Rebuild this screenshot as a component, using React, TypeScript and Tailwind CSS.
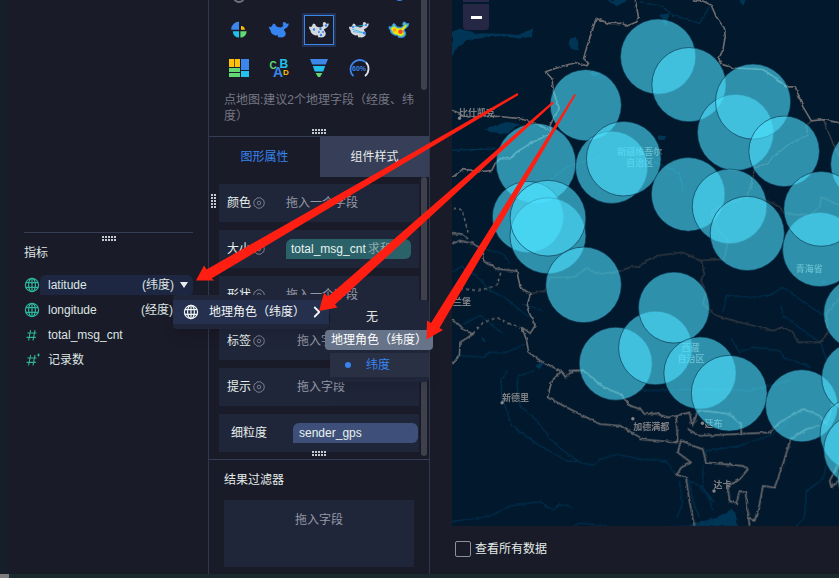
import React from "react";
import { ChevronRight } from "lucide-react";

const FONT = "font-['Liberation_Sans','Noto_Sans_CJK_SC',sans-serif]";

const CHINA =
  "M0 4.6L1.4 5 3 4.2 3.6 2.6 4.6 1.6 6.2 2.2 7 4 8.6 5 11.6 5.4 13.6 4.4 14.4 3.2 13.6 2.2 14.4 0.2 16 0 17.4 1.8 19.8 1.6 19.4 3.6 18 5.4 16.4 6.6 14.8 7.6 15.6 9 16.8 11 16.4 13.4 14.6 15 12.6 15.6 11 15.2 9.4 15.4 8.6 13.2 6.4 13.4 3.6 12.2 2 10.6 1.4 8.2 0.2 6.6Z";

function Globe({ className }: { className: string }) {
  return (
    <svg viewBox="0 0 16 16" className={className} fill="none" stroke="currentColor" strokeWidth="1.2" aria-hidden="true">
      <circle cx="8" cy="8" r="6.6" />
      <ellipse cx="8" cy="8" rx="3.4" ry="6.6" />
      <path d="M8 1.4V14.6M1.8 5.6H14.2M1.8 10.4H14.2" />
    </svg>
  );
}

function Hash({ starred }: { starred?: boolean }) {
  return (
    <svg viewBox="0 0 16 16" className="size-4 text-[#2fb59c]" fill="none" stroke="currentColor" strokeWidth="1.1" aria-hidden="true">
      <path d="M6.6 3L4.6 13.5M11 3L9 13.5M3.4 6H12.6M2.6 10.4H11.8" />
      {starred && <path d="M14.5 1.6V4.4M13.2 3H15.8" />}
    </svg>
  );
}

function Gear() {
  return (
    <svg viewBox="0 0 12 12" className="size-3 text-[#767c8b]" fill="none" stroke="currentColor" aria-hidden="true">
      <path d="M4 0.9H8L9 2.4 10.6 3 11.3 6 10.6 9 9 9.6 8 11.1H4L3 9.6 1.4 9 0.7 6 1.4 3 3 2.4Z" />
      <circle cx="6" cy="6" r="1.8" />
    </svg>
  );
}

function Grip({ vertical }: { vertical?: boolean }) {
  return (
    <svg
      viewBox={vertical ? "0 0 5 14" : "0 0 14 5"}
      className={vertical ? "h-[14px] w-[5px]" : "h-[5px] w-[14px]"}
      fill="#c3cad0"
      aria-hidden="true"
    >
      {[0, 3, 6, 9, 12].flatMap((a) =>
        [0, 3].map((b) => (
          <rect key={`${a}-${b}`} x={vertical ? b : a} y={vertical ? a : b} width="2" height="2" />
        ))
      )}
    </svg>
  );
}

const chartIcons: { name: string; art: React.ReactNode }[] = [
  {
    name: "饼图",
    art: (
      <g>
        <path d="M10 9.8V1.5A8 8 0 0 0 2.2 9.8Z" fill="#3b86e8" />
        <path d="M12 9.8V6A4.5 4.5 0 0 1 16 9.8Z" fill="#ffc107" />
        <path d="M10 11.2H3.8A6.3 6.3 0 0 0 10 17.6Z" fill="#22c0ee" />
        <path d="M11.4 11.2H17.6A6.3 6.3 0 0 1 11.4 17.6Z" fill="#62d873" />
      </g>
    ),
  },
  { name: "填充地图", art: <path d={CHINA} transform="translate(0 2)" fill="#3684f0" /> },
  {
    name: "点地图",
    art: (
      <g transform="translate(0 2)">
        <path d={CHINA} fill="#d3d8df" />
        <g fill="#3684f0">
          <circle cx="5" cy="7.5" r="1.2" />
          <circle cx="11.5" cy="7" r="1.2" />
          <circle cx="10" cy="10" r="1" />
          <circle cx="14" cy="10" r="1" />
          <circle cx="12" cy="13" r="1.2" />
          <circle cx="17" cy="3.5" r="1.2" />
        </g>
      </g>
    ),
  },
  {
    name: "线地图",
    art: (
      <g transform="translate(0 2)">
        <path d={CHINA} fill="#d3d8df" />
        <path d="M3 7L15 11M4 9.5L15 11M17 3L3 5" stroke="#39b7ea" strokeWidth="0.8" fill="none" />
        <g fill="#3684f0">
          <circle cx="4" cy="5" r="1.1" />
          <circle cx="15.5" cy="11" r="1.6" />
          <circle cx="17" cy="3" r="1.1" />
        </g>
      </g>
    ),
  },
  {
    name: "热力地图",
    art: (
      <g transform="translate(0 2)">
        <path d={CHINA} fill="#4fc6a0" stroke="#3684f0" strokeWidth="1" />
        <path d="M2 6.5L5 4.5 8 6.5 13 6.5 16 3.5 18 3 15 7.5 13.5 8.5 15 12 12 14 9 13 5 11.5Z" fill="#ffe600" />
        <circle cx="5.6" cy="8" r="1.8" fill="#ff9a1f" />
        <circle cx="11.5" cy="9.8" r="2.3" fill="#ff4a2a" />
      </g>
    ),
  },
  {
    name: "矩形树图",
    art: (
      <g>
        <path d="M0 1H5V9H0ZM5.7 1H11V9H5.7Z" fill="#ffc107" />
        <path d="M0 10H11V14H0ZM0 15H11V19H0Z" fill="#62d873" />
        <path d="M12 1H20V12H12Z" fill="#3b86e8" />
        <path d="M12 13H20V19H12Z" fill="#22c0ee" />
      </g>
    ),
  },
  {
    name: "词云",
    art: (
      <g fontFamily="Liberation Sans, sans-serif" fontWeight="700">
        <text x="0.5" y="11" fontSize="10" fill="#62d873">C</text>
        <text x="10.5" y="10" fontSize="12" fill="#22c0ee">B</text>
        <text x="4" y="19" fontSize="14" fill="#3b86e8">A</text>
        <text x="14" y="16.5" fontSize="8" fill="#ffc107">D</text>
      </g>
    ),
  },
  {
    name: "漏斗图",
    art: (
      <g>
        <path d="M1 1H19L16.8 6.6H3.2Z" fill="#3b86e8" />
        <path d="M3.8 8H16.2L14.2 13.4H5.8Z" fill="#22c0ee" />
        <path d="M6.6 15H13.4L11 19H9Z" fill="#62d873" />
      </g>
    ),
  },
  {
    name: "仪表盘",
    art: (
      <g fill="none" strokeWidth="1.8">
        <path d="M4.5 18.2A9.2 9.2 0 1 1 17 4.4" stroke="#3b86e8" />
        <path d="M17 4.4A9.2 9.2 0 0 1 16 18" stroke="#dfe3ea" />
        <text x="10" y="13" textAnchor="middle" fontSize="7" fontWeight="700" fill="#3b86e8" stroke="none" fontFamily="Liberation Sans, sans-serif">60%</text>
      </g>
    ),
  },
];

function GeoRoleMenu() {
  return (
    <div className="absolute top-full left-[133px] z-20 w-[156px] rounded-sm bg-[#20273b] py-[5px] shadow-lg">
      <div className="relative">
        <button className="flex h-6 w-full items-center bg-[#24304d] pl-[10px] text-[#f2f5f5]">
          <Globe className="size-4" />
          <span className="ml-[10px] whitespace-nowrap">地理角色（纬度）</span>
          <ChevronRight className="ml-auto mr-[3px] size-[18px]" strokeWidth={2.4} />
        </button>
        <div className="absolute top-0 left-[157px] w-[99px] rounded-sm bg-[#20263a] pb-[5px] shadow-lg">
          <button className="block h-[30px] w-full pt-[3px] pl-9 text-left text-[#e0e5e5]">无</button>
          <div role="tooltip" className="relative -ml-[5px] flex h-5 w-[108px] items-center rounded-sm bg-[#677388] pl-[6px] whitespace-nowrap text-white">
            地理角色（纬度）
          </div>
          <button className="mt-[3px] flex h-6 w-full items-center bg-[#2a3044] pl-[15px] text-[#3684f0]">
            <span className="size-[6px] rounded-full bg-[#3684f0]" />
            <span className="ml-[15px]">纬度</span>
          </button>
        </div>
      </div>
    </div>
  );
}

function MetricsPanel() {
  return (
    <section className="w-[201px] shrink-0 border-r border-[#30384f] pt-[232px] pr-[15px] pl-4 text-[#dde5e3]">
      <div className="flex h-3 justify-center border-t border-[#363e55] pt-[3px]">
        <Grip />
      </div>
      <h2 className="h-[31px] leading-[19px]">指标</h2>
      <ul className="flex flex-col gap-[5px]">
        <li className="relative flex h-5 items-center">
          <Globe className="size-4 text-[#2fb59c]" />
          <button className="flex h-5 flex-1 items-center rounded-t-md rounded-br-sm bg-[#1d2742] pr-[5px] pl-2">
            <span>latitude</span>
            <span className="ml-auto">(纬度)</span>
            <span className="ml-[6px] border-x-4 border-t-[6px] border-x-transparent border-t-[#e8eeee]" />
          </button>
          <div className="absolute top-0 left-4 h-5">
            <GeoRoleMenu />
          </div>
        </li>
        <li className="flex h-5 items-center">
          <Globe className="size-4 text-[#2fb59c]" />
          <span className="ml-2">longitude</span>
          <span className="mr-5 ml-auto">(经度)</span>
        </li>
        <li className="flex h-5 items-center">
          <Hash />
          <span className="ml-2">total_msg_cnt</span>
        </li>
        <li className="flex h-5 items-center">
          <Hash starred />
          <span className="ml-2">记录数</span>
        </li>
      </ul>
    </section>
  );
}

const shelves = [
  { name: "颜色", hint: "拖入一个字段", wide: true },
  { name: "大小", chip: "total_msg_cnt", agg: "求和", wide: true },
  { name: "形状", hint: "拖入一个字段", wide: true },
  { name: "标签", hint: "拖入字段" },
  { name: "提示", hint: "拖入字段" },
];

function ConfigPanel() {
  return (
    <section className="flex w-[221px] shrink-0 flex-col border-r border-[#30384f]">
      <div className="relative h-[137px] overflow-hidden border-b border-[#363e55] pt-[14px]">
        <div className="absolute -top-[9px] left-6 size-3 rounded-full border-2 border-[#6f7380]" />
        <div className="absolute -top-[10px] left-[185px] size-[11px] rounded-full bg-[#3b86e8]" />
        <div className="grid w-[210px] grid-cols-5 gap-y-[6px] pl-[10px]">
          {chartIcons.map((icon, i) => (
            <button key={icon.name} aria-label={icon.name} className="flex h-8 items-center justify-center">
              <span
                className={
                  i === 2
                    ? "flex size-[30px] items-center justify-center border border-[#3b86e8] outline-2 outline-[#20304e]"
                    : "flex size-[30px] items-center justify-center"
                }
              >
                <svg viewBox="0 0 20 20" className="size-5 shrink-0 overflow-visible">
                  {icon.art}
                </svg>
              </span>
            </button>
          ))}
        </div>
        <p className="mt-2 ml-[15px] w-[192px] leading-4 break-all text-[#747884]">点地图:建议2个地理字段（经度、纬度）</p>
        <div className="absolute bottom-[2px] left-[103px]">
          <Grip />
        </div>
        <div className="absolute top-0 right-[2px] h-[90px] w-[6px] rounded-b-full bg-[#3e404c]" />
      </div>

      <div role="tablist" className="flex h-10">
        <button role="tab" aria-selected="true" className="flex-1 text-[#3684f0]">图形属性</button>
        <button role="tab" aria-selected="false" className="w-[109px] bg-[#363f57] text-[#e6ecea]">组件样式</button>
      </div>

      <div className="relative flex h-[283px] flex-col gap-2 border-b border-[#363e55] pt-[7px] pr-[10px] pl-[10px]">
        <div className="absolute top-[17px] left-[2px]">
          <Grip vertical />
        </div>
        <div className="absolute top-0 right-[2px] h-[279px] w-[6px] rounded-full bg-[#3e404c]" />
        {shelves.map((s) => (
          <div key={s.name} className="flex h-[38px] items-center bg-[#20263a] pl-2">
            <span className="text-[#e6eeea]">{s.name}</span>
            <span className="ml-[2px]">
              <Gear />
            </span>
            {s.chip ? (
              <span className="ml-[21px] flex h-5 w-[125px] items-center rounded-t-md rounded-br-md bg-[#2b6169] pl-[5px] text-[#e6f2ee]">
                {s.chip}
                <span className="ml-[2px] text-[#8fa9ac]">{s.agg}</span>
              </span>
            ) : (
              <span className={s.wide ? "ml-[21px] text-[#9499a6]" : "ml-8 text-[#9499a6]"}>{s.hint}</span>
            )}
          </div>
        ))}
        <div className="flex h-[38px] items-center bg-[#20263a] pl-3">
          <span className="text-[#e6eeea]">细粒度</span>
          <span className="ml-[26px] flex h-5 w-[125px] items-center rounded-t-md rounded-br-md bg-[#3e507a] pl-[6px] text-[#e6f2ee]">
            sender_gps
          </span>
        </div>
        <div className="absolute bottom-[3px] left-[103px]">
          <Grip />
        </div>
      </div>

      <div className="px-[15px] pt-[10px] pb-[7px]">
        <h2 className="h-[30px] leading-5 text-[#e4ece8]">结果过滤器</h2>
        <div className="h-[67px] bg-[#20263a] pt-[10px] text-center leading-5 text-[#9499a6]">拖入字段</div>
      </div>
    </section>
  );
}

const bubbles: [number, number, number][] = [
  [585.5, 105, 35.5], [657.7, 56.5, 37.5], [688.5, 84.5, 37], [735, 132.2, 38], [752.5, 101.4, 37.5],
  [783.5, 151, 35.2], [866, 164, 36], [535.8, 163, 39.8], [611.3, 167, 36], [623.4, 158.4, 37.2],
  [687.7, 194, 36.7], [729, 206, 37.2], [746.7, 233, 37], [819, 249, 37], [820.5, 208.5, 37.3],
  [527.8, 216.5, 35.5], [547.8, 235.3, 37.9], [547.8, 217.8, 37.8], [583.3, 284.3, 37.7],
  [615.4, 363, 36.4], [655, 347.3, 36.7], [673.5, 307, 35.4], [699.5, 372.3, 36], [728.7, 392.5, 37.8],
  [801, 405, 36], [859, 313, 36], [857, 377, 36], [856, 433, 36.5], [859, 449, 36], [873, 478, 36],
];

const places: [string, number, number][] = [
  ["比什凯克", 459, 116], ["新疆维吾尔", 617, 155], ["自治区", 626, 166], ["青海省", 795, 271],
  ["西藏", 681, 350], ["自治区", 677, 361], ["新德里", 502, 400], ["加德满都", 633, 429],
  ["廷布", 704, 426], ["达卡", 713, 487], ["兰堡", 453, 304],
];

// Map sheets: each is drawn at three times scale from its own origin.
const sheets = [
  {
    x: 440, y: 0,
    border: "M585 0L594 50 590 65 560 78 545 70 505 70 468 55 440 140 430 175 445 190 440 197 405 187 345 205 316 215 335 235 340 275 357 325 345 345 330 375 332 400 270 430 230 455 210 475 180 475 165 490 155 510 115 515 70 505 36 532M36 330L75 350 170 348 240 355 300 375 325 390",
    dim: "",
    river: "M36 450L200 445M290 570L380 500 480 470",
    lake: "M36 95L60 85 100 100 180 100 235 105 280 85 275 110 240 115 180 108 80 120 45 150 36 170ZM390 115L410 110 418 150 395 150 385 130ZM135 385L200 365 240 372 200 400 150 395ZM500 0L530 18 565 0ZM445 215L480 220 465 228Z",
  },
  {
    x: 639, y: 0,
    border: "M160 0L190 3 215 15 230 50 255 85 257 110 250 150 238 175 245 192 280 203 370 208 410 235 440 260 467 260 490 320 515 362 550 358 600 368",
    dim: "M550 358L580 430 600 470M515 362L500 375 505 405 450 430 400 470 385 490 345 500 335 570",
    river: "M0 5L70 20 100 45 180 70 210 20M0 480L60 490 120 520 130 570",
    lake: "M60 45L90 40 80 80ZM55 405L80 408 75 420 55 418ZM300 0L318 0 312 15Z",
  },
  {
    x: 440, y: 180,
    border: "M36 190L60 180 100 190 125 205 130 240 170 265 230 272 240 320 270 340 260 380 285 435 270 458 245 440 260 480 265 515 300 540 360 570M36 160L60 160 85 175M36 415L60 435 75 450 100 460 60 485 58 525 36 552M385 570L430 568",
    dim: "M270 340L315 330 330 290 400 290 440 262 470 280 530 275 575 258 600 260",
    river: "M36 275L65 258 80 275 110 285 150 330 200 355 260 405 280 410M130 205L190 220 210 250M245 370L310 390M60 525L130 530 150 515 200 515 255 490M70 430L120 405 150 430 190 460",
    lake: "M122 465L138 482 130 485ZM285 555L312 540 300 568Z",
  },
  {
    x: 639, y: 180,
    border: "",
    dim: "M0 258L20 240 60 225 130 215 180 240 255 236 265 180 230 140 215 95 250 75 320 50 338 0M185 240L195 280 185 300 200 340 190 370 230 405 300 425 400 450 430 440 460 455 475 485 540 485 565 455 560 400 600 350M380 60L420 80 435 100 510 105 540 80 545 50 600 75",
    river: "M252 395L260 345 340 350 390 345 430 320 500 370 550 405M425 375L430 405 520 470 545 490 560 540M275 475L300 515 340 500 420 510 430 530 520 560",
    lake: "M540 303L560 303 550 312Z",
  },
  {
    x: 440, y: 370,
    border: "M365 0L335 30 322 80 400 120 480 160 540 165 600 200M365 5L375 18 400 0 430 0 490 50 540 70 570 105 600 115",
    dim: "",
    river: "M285 0L235 15 230 40 240 105 290 150 330 205 370 240 420 275 460 283 480 265 530 250 600 265M205 0L182 30 185 80 200 120 215 165 300 225 380 270 410 272M36 452L150 435 210 405 300 392 340 418 360 398 395 410M400 465L420 457 500 465",
    lake: "",
  },
  {
    x: 639, y: 370,
    border: "M0 110L15 130 50 128 85 140 110 135 150 125 158 165 165 150 175 120 210 122 270 130 305 160 305 190M145 175L180 195 390 185 420 155 490 115 540 135 560 160 580 100M0 205L60 210 115 215 110 135M165 465L150 390 140 320 112 312 125 290 155 275 115 245 125 208 160 225 190 235 200 275 310 285 325 295 300 325 265 345 270 390 290 398 300 360 318 365 330 465M330 440L345 450 360 400 370 345 405 350 430 280 453 205 500 175 540 165M600 325L575 350 570 330 600 270",
    dim: "",
    river: "M0 265L80 270 110 310 190 350 225 395M190 350L190 290 200 240 300 225 400 190 450 150M120 330L130 400 110 440M150 330L160 390 180 440M180 350L210 380 220 420M470 465L495 440 500 360 550 325 560 280M0 60L200 55 330 60 450 30",
    lake: "M90 465L150 462 230 440 275 415 290 430 295 465Z",
  },
];

function MapView() {
  return (
    <div className="relative flex-1 overflow-hidden bg-[#01182d]">
      <svg viewBox="452 0 387 525" preserveAspectRatio="xMinYMin slice" className="absolute inset-0 size-full" role="img" aria-label="点地图">
        <defs>
          <filter id="coast" x="-5%" y="-5%" width="110%" height="110%">
            <feTurbulence type="fractalNoise" baseFrequency="0.2" numOctaves="2" seed="4" />
            <feDisplacementMap in="SourceGraphic" scale="3" xChannelSelector="R" yChannelSelector="G" />
          </filter>
        </defs>
        <g filter="url(#coast)" fill="none" strokeLinejoin="round">
          {sheets.map((s) => (
            <g key={`${s.x}-${s.y}`} transform={`translate(${s.x} ${s.y}) scale(0.33333)`}>
              <path d={s.lake} fill="#033656" />
              <path d={s.river} stroke="#06304c" strokeWidth="4" />
              <path d={s.dim} stroke="#3a3d44" strokeWidth="4" />
              <path d={s.border} stroke="#6c6b6e" strokeWidth="5" />
            </g>
          ))}
          <g stroke="#6c6b6e" strokeWidth="1.5" strokeDasharray="3 3">
            <path d="M453 208L462 209 468 232M460 288L478 290 497 285 501 271M473 333L483 322 497 317 507 322 520 327" />
          </g>
        </g>
        <g fill="#85858a">
          <circle cx="459.5" cy="118" r="1.7" />
          <circle cx="502" cy="402" r="1.7" />
          <circle cx="632.5" cy="418" r="1.7" />
          <circle cx="702" cy="422.5" r="1.7" />
          <circle cx="713.5" cy="490" r="1.7" />
        </g>
        <g fill="#808084" fontSize="9" fontWeight="700" fontFamily="Noto Sans CJK SC, sans-serif">
          {places.map(([name, x, y]) => (
            <text key={`${name}-${x}`} x={x} y={y}>{name}</text>
          ))}
        </g>
        <g fill="#4de1ff" fillOpacity="0.6" stroke="#0d3550" strokeOpacity="0.8" strokeWidth="0.8">
          {bubbles.map(([x, y, r]) => (
            <circle key={`${x}-${y}`} cx={x} cy={y} r={r} />
          ))}
        </g>
      </svg>
      <div className="absolute top-0 left-[11px] flex flex-col gap-[2px]">
        <div className="h-[2px] w-[26px] bg-[#26294a]" />
        <button aria-label="缩小" className="flex size-[26px] items-center justify-center rounded-b bg-[#252744]">
          <span className="h-[3px] w-[11px] bg-white" />
        </button>
      </div>
    </div>
  );
}

function Arrows() {
  return (
    <svg viewBox="0 0 600 360" className="pointer-events-none absolute top-0 left-0 z-30 h-[360px] w-[600px]" fill="#ff1f12" aria-hidden="true">
      <path d="M196 280.5L204 265.5 206.5 269.5 517.5 93 518.5 95 211.5 278.5 214.5 280.5Z" />
      <path d="M319 311L324 293 328 296.5 552.5 101.5 554 103 335 304.5 337.5 307.5Z" />
      <path d="M426.5 339.5L427 320.5 431 323 574.3 94 575.8 95 439.5 328 443 330Z" />
    </svg>
  );
}

export default function App() {
  return (
    <div className={`relative flex min-h-screen flex-col overflow-hidden bg-[#1a1b28] text-[12px] leading-5 ${FONT}`}>
      <main className="flex flex-1">
        <div className="w-2 shrink-0 bg-[#161e2a]" />
        <MetricsPanel />
        <ConfigPanel />
        <section className="flex min-w-0 flex-1 flex-col pl-[22px]">
          <MapView />
          <label className="flex h-12 items-center gap-1 pb-[3px] pl-[3px] text-[#e4ece8]">
            <input type="checkbox" className="size-4 appearance-none rounded-xs border border-[#8d90a0]" />
            查看所有数据
          </label>
        </section>
      </main>
      <footer className="h-1 bg-[#1b2a2e]">
        <div className="h-1 w-[9px] bg-[#7d7d80]" />
      </footer>
      <Arrows />
    </div>
  );
}
